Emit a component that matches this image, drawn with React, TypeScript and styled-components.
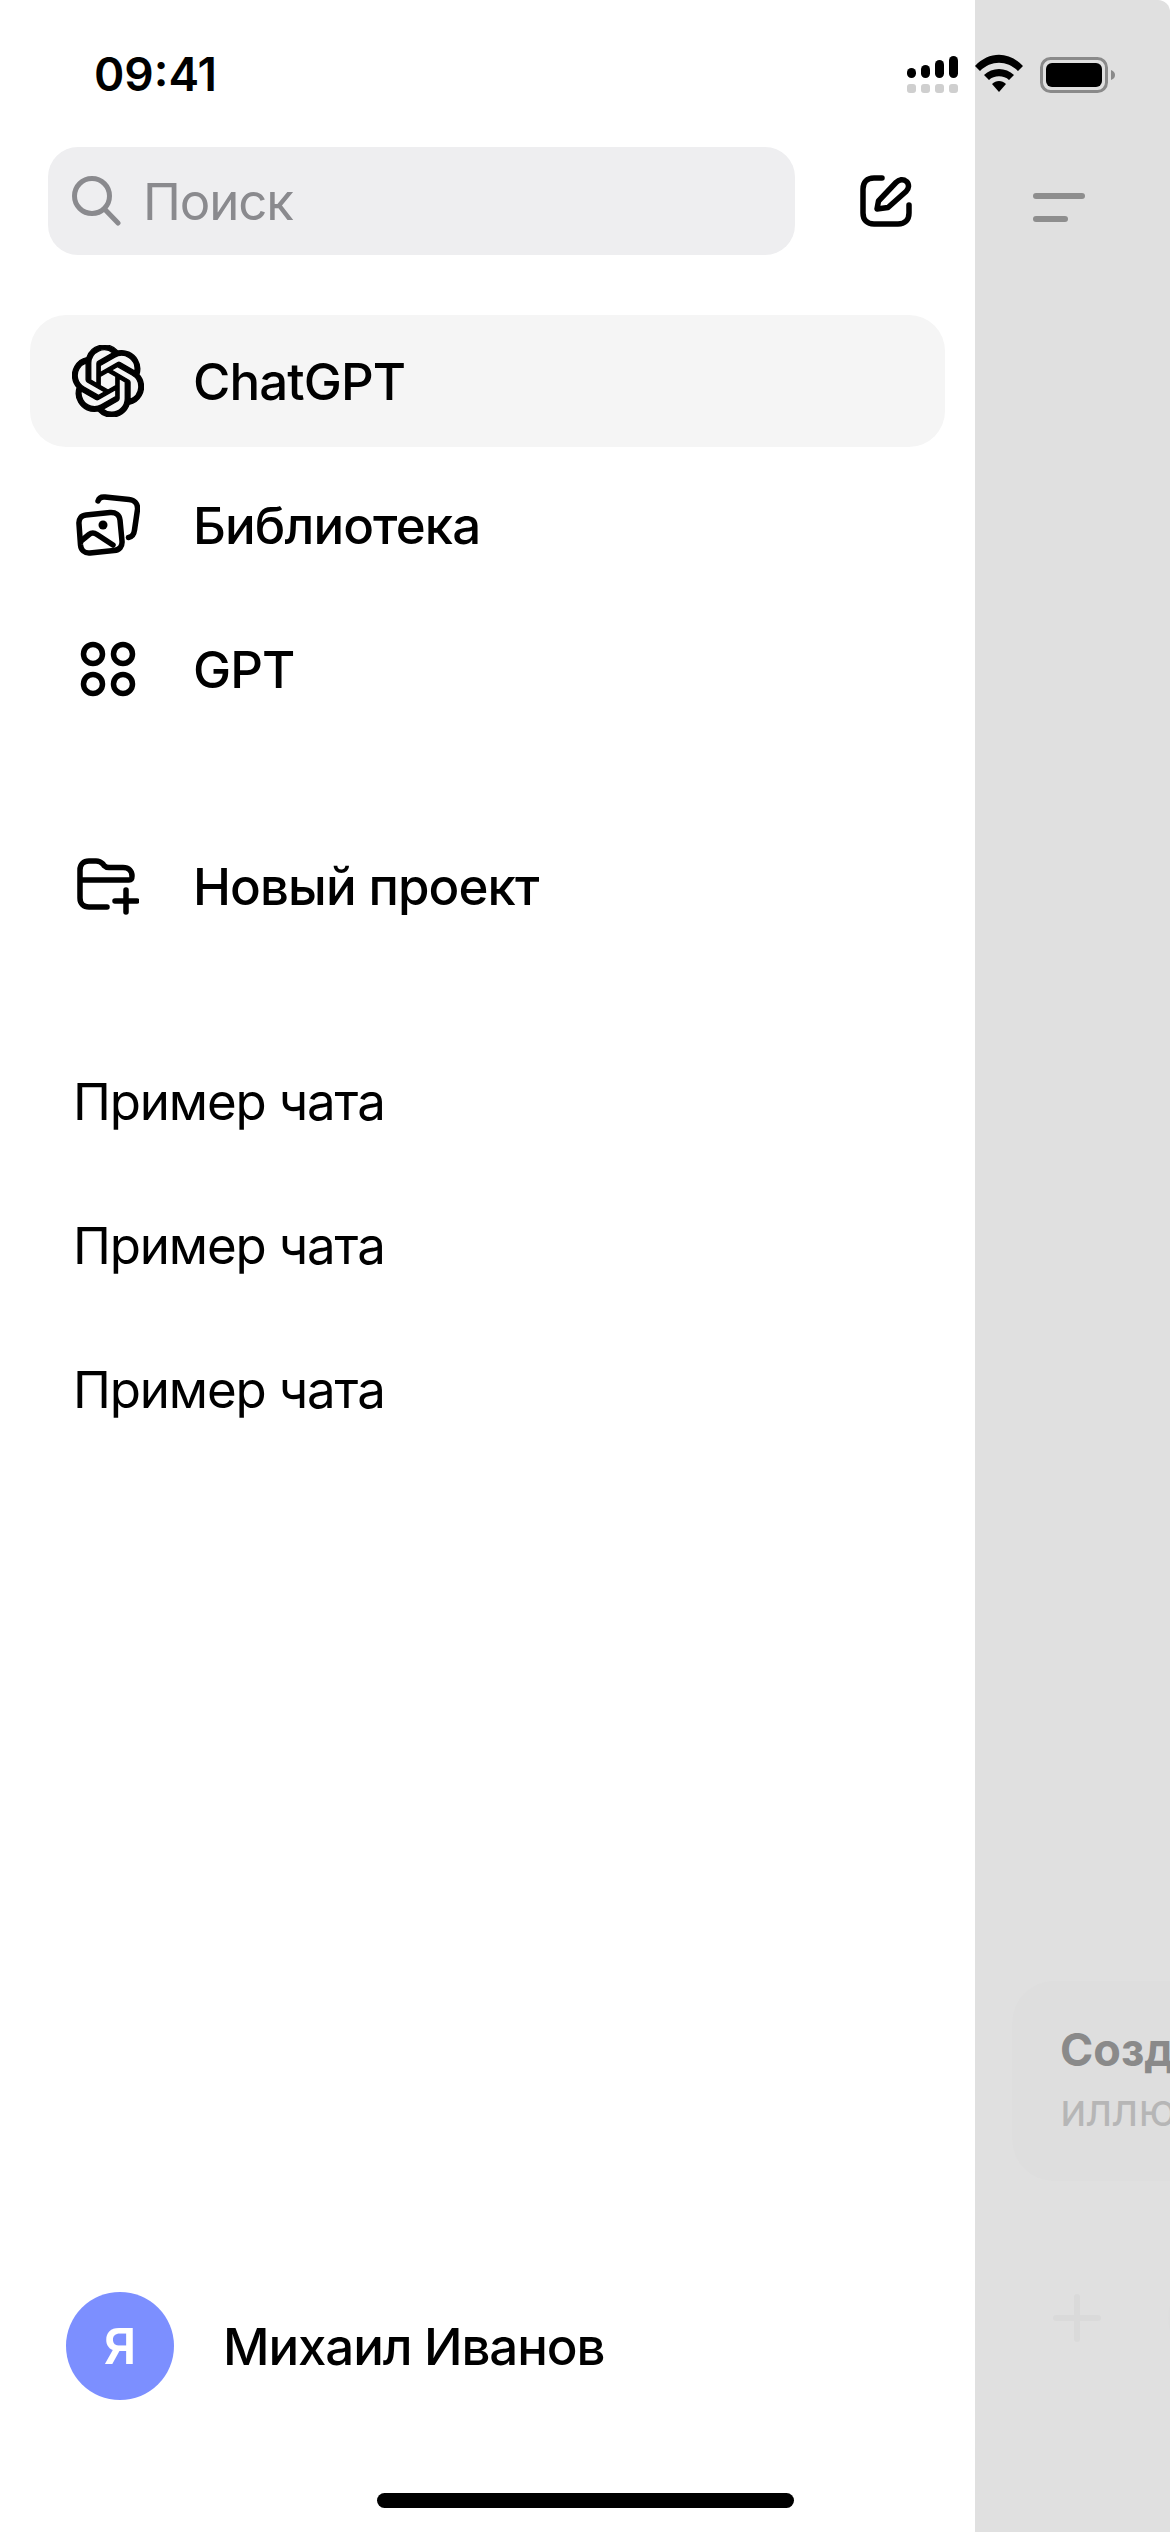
import React from "react";
import styled, { createGlobalStyle } from "styled-components";

const Global = createGlobalStyle`
    html, body {
        margin: 0;
        padding: 0;
        background: #ffffff;
    }
    * {
        box-sizing: border-box;
    }
`;

const Screen = styled.div`
    position: relative;
    width: 1170px;
    height: 2532px;
    display: flex;
    overflow: hidden;
    background: #ffffff;
    font-family: Inter, "Liberation Sans", sans-serif;
    color: #000000;
`;

const Drawer = styled.aside`
    width: 975px;
    flex-shrink: 0;
    display: flex;
    flex-direction: column;
    padding: 147px 30px 0;
`;

const SearchRow = styled.div`
    display: flex;
    align-items: center;
    height: 108px;
    padding-left: 18px;
    margin-bottom: 60px;
`;

const SearchBox = styled.div`
    width: 747px;
    height: 108px;
    flex-shrink: 0;
    display: flex;
    align-items: center;
    gap: 21px;
    padding-left: 24px;
    border-radius: 30px;
    background: #eeeef0;
    color: #8a8a8e;
    font-size: 51px;
    letter-spacing: -1.1px;
`;

const ComposeButton = styled.div`
    margin-left: 65px;
    display: flex;
`;

const Nav = styled.nav<{ $after: number }>`
    display: flex;
    flex-direction: column;
    gap: 12px;
    margin-bottom: ${(p) => p.$after}px;
`;

const Row = styled.div<{ $active?: boolean }>`
    height: 132px;
    display: flex;
    align-items: center;
    padding-left: 40px;
    border-radius: 36px;
    font-size: 51px;
    font-weight: 500;
    letter-spacing: -0.9px;
    background: ${(p) => (p.$active ? "#f5f5f5" : "transparent")};
`;

const IconSlot = styled.div`
    width: 90px;
    height: 90px;
    margin-left: -7px;
    margin-right: 40px;
    display: flex;
    align-items: center;
    justify-content: center;
    flex-shrink: 0;
`;

const ChatRow = styled(Row)`
    padding-left: 43px;
    font-weight: 400;
    letter-spacing: -1.15px;
`;

const Footer = styled.div`
    margin-top: auto;
    margin-bottom: 132px;
    display: flex;
    align-items: center;
    padding-left: 36px;
    gap: 49px;
    font-size: 51px;
    font-weight: 500;
    letter-spacing: -1.1px;
`;

const Avatar = styled.div`
    width: 108px;
    height: 108px;
    border-radius: 50%;
    background: #7c8fff;
    color: #ffffff;
    font-size: 50px;
    font-weight: 600;
    letter-spacing: 0;
    display: flex;
    align-items: center;
    justify-content: center;
`;

const Backdrop = styled.main`
    flex: 1;
    min-width: 0;
    display: flex;
    flex-direction: column;
    padding: 193px 0 0 58px;
    background: #e0e0e0;
    border-top-right-radius: 12px;
`;

const MenuGlyph = styled.div`
    display: flex;
    flex-direction: column;
    gap: 17px;
    margin-bottom: 1759px;
`;

const MenuLine = styled.div<{ $w: number }>`
    width: ${(p) => p.$w}px;
    height: 6px;
    border-radius: 3px;
    background: #8e8e8e;
`;

const Suggestion = styled.div`
    margin-left: -21px;
    width: 400px;
    height: 200px;
    flex-shrink: 0;
    padding: 42px 0 0 48px;
    border-radius: 42px;
    background: #dedede;
    white-space: nowrap;
    font-size: 45px;
    line-height: 54px;
`;

const SuggestionTitle = styled.div`
    font-weight: 700;
    color: #8a8a8a;
`;

const SuggestionText = styled.div`
    margin-top: 6px;
    color: #b6b6b6;
`;

const Composer = styled.div`
    margin-top: 83px;
    margin-left: 20px;
    width: max-content;
    display: flex;
    align-items: center;
    gap: 67px;
`;

const ComposerPlus = styled.svg`
    flex-shrink: 0;
`;

const ComposerField = styled.div`
    width: 300px;
    height: 108px;
    flex-shrink: 0;
    border-radius: 54px;
    background: #dedede;
`;

const StatusBar = styled.div`
    position: absolute;
    top: 0;
    left: 0;
    width: 100%;
    height: 147px;
`;

const Clock = styled.div`
    position: absolute;
    left: 94px;
    top: 46px;
    font-size: 46px;
    line-height: 56px;
    font-weight: 600;
`;

const StatusIcons = styled.svg`
    position: absolute;
    left: 900px;
    top: 50px;
`;

const HomeBar = styled.div`
    position: absolute;
    left: 377px;
    top: 2493px;
    width: 417px;
    height: 15px;
    border-radius: 8px;
    background: #000000;
`;

const SearchIcon = () => (
    <svg width="50" height="50" viewBox="0 0 50 50" fill="none" stroke="#8a8a8e" strokeWidth="5" strokeLinecap="round">
        <circle cx="20" cy="20" r="17.500" />
        <path d="M32.500 33L46 47" />
    </svg>
);

const ComposeIcon = () => (
    <svg width="52" height="52" viewBox="0 0 52 52" fill="none" stroke="#000" strokeWidth="5.500" strokeLinecap="round" strokeLinejoin="round">
        <path d="M22 3H14C7 3 3 7 3 14V38C3 45 7 49 14 49H38C45 49 49 45 49 38V30" />
        <path d="M17 34L18.500 26L36 7.500C39 4.500 43 3.500 46.500 6.500C49.500 9.500 49 13.500 46 16.500L28 32.500Z" />
    </svg>
);

const ChatGPTIcon = () => (
    <svg width="72" height="72" viewBox="0 0 24 24" fill="#000" stroke="#000" strokeWidth="0.45">
        <path d="M22.282 9.821a5.985 5.985 0 0 0-.516-4.91 6.046 6.046 0 0 0-6.51-2.9A6.065 6.065 0 0 0 4.981 4.18a5.985 5.985 0 0 0-3.998 2.9 6.046 6.046 0 0 0 .743 7.097 5.98 5.98 0 0 0 .51 4.911 6.051 6.051 0 0 0 6.515 2.9A5.985 5.985 0 0 0 13.26 24a6.056 6.056 0 0 0 5.772-4.206 5.99 5.99 0 0 0 3.997-2.9 6.056 6.056 0 0 0-.747-7.073zM13.26 22.43a4.476 4.476 0 0 1-2.876-1.04l.141-.081 4.779-2.758a.795.795 0 0 0 .392-.681v-6.737l2.02 1.168a.071.071 0 0 1 .038.052v5.583a4.504 4.504 0 0 1-4.494 4.494zM3.6 18.304a4.47 4.47 0 0 1-.535-3.014l.142.085 4.783 2.759a.771.771 0 0 0 .78 0l5.843-3.369v2.332a.08.08 0 0 1-.033.062L9.74 19.95a4.5 4.5 0 0 1-6.14-1.646zM2.34 7.896a4.485 4.485 0 0 1 2.366-1.973V11.6a.766.766 0 0 0 .388.676l5.815 3.355-2.02 1.168a.076.076 0 0 1-.071 0l-4.83-2.786A4.504 4.504 0 0 1 2.34 7.872zm16.597 3.855l-5.833-3.387L15.119 7.2a.076.076 0 0 1 .071 0l4.83 2.791a4.494 4.494 0 0 1-.676 8.105v-5.678a.79.79 0 0 0-.407-.667zm2.01-3.023l-.141-.085-4.774-2.782a.776.776 0 0 0-.785 0L9.409 9.23V6.897a.066.066 0 0 1 .028-.061l4.83-2.787a4.5 4.5 0 0 1 6.68 4.66zm-12.64 4.135l-2.02-1.164a.08.08 0 0 1-.038-.057V6.075a4.5 4.5 0 0 1 7.375-3.453l-.142.08L8.704 5.46a.795.795 0 0 0-.393.681zm1.097-2.365l2.602-1.5 2.607 1.5v2.999l-2.597 1.5-2.607-1.5z" />
    </svg>
);

const LibraryIcon = () => (
    <svg width="64" height="62" viewBox="0 0 64 62" fill="none" stroke="#000" strokeWidth="5.500" strokeLinecap="round" strokeLinejoin="round">
        <path d="M22 7C23 4 25 2.500 29 3L53 5.500C58.500 6 62 10 61.500 15.500L58.500 36C58 40.500 55.500 43 52.500 43.500" />
        <path d="M10 21L34 18.500C39.500 18 43.500 21 44 26L46 47C46.500 52.500 43.500 56 38 56.500L14 59C8.500 59.500 5 56 4.500 51L3 30C2.500 25 5 21.500 10 21Z" />
        <path d="M5 47L13 40.500C15.500 38.500 18 38.500 21 40.500L37 51" />
        <circle cx="27" cy="31" r="4.500" fill="#000" stroke="none" />
    </svg>
);

const AppsIcon = () => (
    <svg width="56" height="56" viewBox="0 0 56 56" fill="none" stroke="#000" strokeWidth="5.500">
        <circle cx="13" cy="13" r="9.500" />
        <circle cx="43" cy="13" r="9.500" />
        <circle cx="13" cy="43" r="9.500" />
        <circle cx="43" cy="43" r="9.500" />
    </svg>
);

const FolderPlusIcon = () => (
    <svg width="62" height="57" viewBox="0 0 62 57" fill="none" stroke="#000" strokeWidth="5.500" strokeLinecap="round" strokeLinejoin="round">
        <path d="M30 49H12C6.500 49 3 45.500 3 40V12C3 6.500 6.500 3 12 3H19C22 3 24 4 26 6L27 7.500C28.500 9 30 9.500 32 9.500H46C52 9.500 55 13 55 18C55 21 54 22 52 22H3" />
        <path d="M49 32V54M38 43H60" />
    </svg>
);

export default function App() {
    return (
        <Screen>
            <Global />
            <Drawer>
                <SearchRow>
                    <SearchBox>
                        <SearchIcon />
                        Поиск
                    </SearchBox>
                    <ComposeButton>
                        <ComposeIcon />
                    </ComposeButton>
                </SearchRow>
                <Nav $after={85}>
                    <Row $active>
                        <IconSlot><ChatGPTIcon /></IconSlot>
                        ChatGPT
                    </Row>
                    <Row>
                        <IconSlot><LibraryIcon /></IconSlot>
                        Библиотека
                    </Row>
                    <Row>
                        <IconSlot><AppsIcon /></IconSlot>
                        GPT
                    </Row>
                </Nav>
                <Nav $after={83}>
                    <Row>
                        <IconSlot><FolderPlusIcon /></IconSlot>
                        Новый проект
                    </Row>
                </Nav>
                <Nav $after={0}>
                    <ChatRow>Пример чата</ChatRow>
                    <ChatRow>Пример чата</ChatRow>
                    <ChatRow>Пример чата</ChatRow>
                </Nav>
                <Footer>
                    <Avatar>Я</Avatar>
                    Михаил Иванов
                </Footer>
            </Drawer>
            <Backdrop>
                <MenuGlyph>
                    <MenuLine $w={52} />
                    <MenuLine $w={35} />
                </MenuGlyph>
                <Suggestion>
                    <SuggestionTitle>Создать</SuggestionTitle>
                    <SuggestionText>иллюстрацию</SuggestionText>
                </Suggestion>
                <Composer>
                    <ComposerPlus width="48" height="48" viewBox="0 0 48 48" stroke="#dadada" strokeWidth="6" strokeLinecap="round">
                        <path d="M24 3V45M3 24H45" />
                    </ComposerPlus>
                    <ComposerField />
                </Composer>
            </Backdrop>
            <StatusBar>
                <Clock>09:41</Clock>
                <StatusIcons width="220" height="50" viewBox="0 0 220 50">
                    <rect x="7" y="18" width="9" height="10" rx="4.500" fill="#000" />
                    <rect x="21" y="15" width="9" height="13" rx="4.500" fill="#000" />
                    <rect x="35" y="10" width="9" height="18" rx="4.500" fill="#000" />
                    <rect x="49" y="6" width="9" height="22" rx="4.500" fill="#000" />
                    <rect x="7" y="34" width="9" height="9" rx="3" fill="#cfcfcf" />
                    <rect x="21" y="34" width="9" height="9" rx="3" fill="#cfcfcf" />
                    <rect x="35" y="34" width="9" height="9" rx="3" fill="#cfcfcf" />
                    <rect x="49" y="34" width="9" height="9" rx="3" fill="#cfcfcf" />
                    <path d="M75 16C89 1 109 1 123 16L118 21C107 10 91 10 80 21Z" fill="#000" />
                    <path d="M84 25C92 17 106 17 114 25L109 30C104 25 94 25 89 30Z" fill="#000" />
                    <path d="M92 34C96 30 102 30 106 34L99 42Z" fill="#000" />
                    <rect x="141.500" y="8.500" width="65" height="33" rx="9" fill="none" stroke="#8a8a8a" strokeWidth="3" />
                    <rect x="146" y="13" width="56" height="24" rx="6" fill="#000" />
                    <path d="M211 20C214 21 215 23 215 25C215 27 214 29 211 30Z" fill="#8a8a8a" />
                </StatusIcons>
            </StatusBar>
            <HomeBar />
        </Screen>
    );
}
